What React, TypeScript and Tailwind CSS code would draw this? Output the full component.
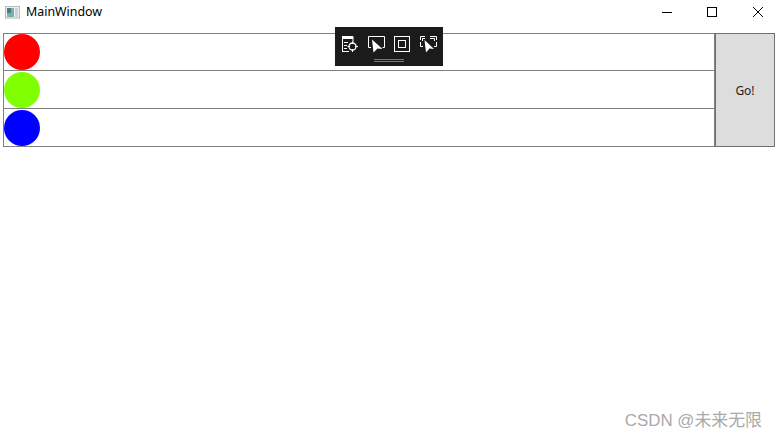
function AppIcon() {
  return (
    <svg width="16" height="16" viewBox="0 0 16 16" className="mr-[5px]">
      <rect x="0.5" y="1.5" width="14" height="11.5" fill="#eef0f1" stroke="#b4babd" />
      <rect x="2" y="3" width="7" height="9" fill="#7fb0a8" />
      <rect x="2" y="3" width="4" height="5" fill="#3f7f88" />
      <rect x="10" y="3" width="3" height="9" fill="#cdd3d6" />
    </svg>
  );
}

function ToolbarIcons() {
  return (
    <div className="flex items-center gap-[8px] pl-[6px] pt-[8px]">
      {/* live visual tree */}
      <svg width="18" height="18" viewBox="0 0 18 18" fill="none" stroke="#fff" strokeWidth="1">
        <path d="M1.5 17V1.5H12V7" />
        <rect x="1" y="1" width="11" height="3" fill="#fff" stroke="none" />
        <path d="M3 7.5H7M3 10.5H6M3 13.5H6M1.5 16.5H8" />
        <circle cx="11.5" cy="11.5" r="3.5" strokeWidth="1.3" />
        <path d="M11.5 6.5V9M11.5 14V17M6.5 11.5H9M14 11.5H17" />
      </svg>
      {/* select element */}
      <svg width="18" height="18" viewBox="0 0 18 18" fill="none" stroke="#fff" strokeWidth="1">
        <path d="M4 12.5H1.5V1.5H17.5V12.5H15.5" />
        <path d="M5 4.5L15.5 14L10.5 13.5L6.5 17.5Z" fill="#fff" stroke="none" />
      </svg>
      {/* layout adorners */}
      <svg width="18" height="18" viewBox="0 0 18 18" fill="none" stroke="#fff" strokeWidth="1">
        <rect x="1.5" y="1.5" width="15" height="15" />
        <rect x="5.5" y="5.5" width="7" height="7" />
      </svg>
      {/* track focused element */}
      <svg width="18" height="18" viewBox="0 0 18 18" fill="none" stroke="#fff" strokeWidth="1">
        <path d="M1.5 5V1.5H6M11 1.5H17.5V5M17.5 7V11.5H15M1.5 7V11.5H4" />
        <path d="M3.5 6V3.5H6M11 3.5H15.5V6" />
        <path d="M5.5 5L15 14L10.5 13.5L7 17.5Z" fill="#fff" stroke="none" />
      </svg>
    </div>
  );
}

export default function App() {
  return (
    <div className="relative w-[777px] h-[438px] bg-white overflow-hidden font-['Noto_Sans','Liberation_Sans',sans-serif] text-black">
      {/* title bar */}
      <div className="flex items-center h-[25px] pl-[5px] text-[12.4px]">
        <AppIcon />
        <span>MainWindow</span>
        <div className="ml-auto flex items-center">
          <svg width="46" height="24" viewBox="0 0 46 24" fill="none" stroke="#000" strokeWidth="1">
            <path d="M23 11.5H33" />
          </svg>
          <svg width="46" height="24" viewBox="0 0 46 24" fill="none" stroke="#000" strokeWidth="1">
            <rect x="22.5" y="6.5" width="9" height="9" />
          </svg>
          <svg width="46" height="24" viewBox="0 0 46 24" fill="none" stroke="#000" strokeWidth="1">
            <path d="M22 6L32 16M32 6L22 16" />
          </svg>
        </div>
      </div>

      {/* content grid */}
      <div className="flex h-[114px] mt-[8px] ml-[3px] w-[772px]">
        <div className="flex flex-col w-[712px] border border-[#808080]">
          <div className="flex-1 border-b border-[#808080]">
            <div className="w-[36px] h-[36px] rounded-full bg-[#ff0000]" />
          </div>
          <div className="flex-1 border-b border-[#808080] pt-px">
            <div className="w-[36px] h-[36px] rounded-full bg-[#7fff00]" />
          </div>
          <div className="flex-1 pt-px">
            <div className="w-[36px] h-[36px] rounded-full bg-[#0000ff]" />
          </div>
        </div>
        <button className="flex-1 flex items-center justify-center bg-[#dddddd] border border-[#707070] pt-px text-[12px] text-[#222222]">
          Go!
        </button>
      </div>

      {/* runtime tools toolbar */}
      <div className="absolute left-[335px] top-[27px] w-[108px] h-[39px] bg-[#1b1b1b]">
        <ToolbarIcons />
        <div className="absolute left-[39px] top-[32px] w-[30px] h-[3px] border-y border-[#777777]" />
      </div>

      {/* watermark */}
      <div className="absolute right-[15px] bottom-[5px] text-[16.9px] text-[#a9a9a9] font-['Liberation_Sans','Noto_Sans_CJK_SC',sans-serif]">
        CSDN @未来无限
      </div>
    </div>
  );
}
